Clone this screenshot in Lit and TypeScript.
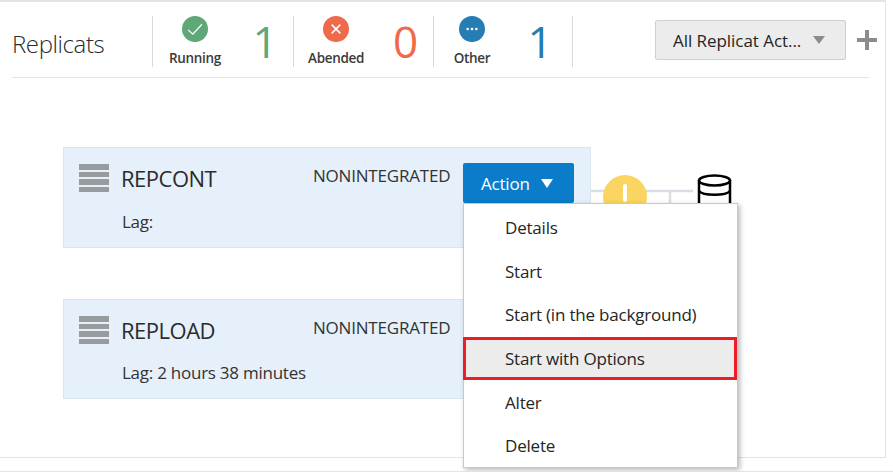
import {LitElement, html, css, svg} from 'lit';
import {customElement} from 'lit/decorators.js';

const statuses = [
  {label: 'Running', count: '1', color: '#5fa777', kind: 'running', glyph: svg`<path d="M7 16l5.500 5L23 9.500" fill="none" stroke="#fff" stroke-width="1.4"/>`},
  {label: 'Abended', count: '0', color: '#ef6a4b', kind: 'abended', glyph: svg`<path d="M10 10l10 10M20 10l-10 10" fill="none" stroke="#fff" stroke-width="1.8"/>`},
  {label: 'Other', count: '1', color: '#267db3', kind: 'other', glyph: svg`<circle cx="10" cy="15" r="1.5" fill="#fff"/><circle cx="15" cy="15" r="1.5" fill="#fff"/><circle cx="20" cy="15" r="1.5" fill="#fff"/>`},
];

const menuItems = ['Details', 'Start', 'Start (in the background)', 'Start with Options', 'Alter', 'Delete'];

@customElement('app-root')
export class AppRoot extends LitElement {
  static override styles = css`
    :host {
      display: block;
      width: 893px;
      height: 472px;
      overflow: hidden;
      background: #fff;
      color: #252525;
      font-family: 'Open Sans', 'Noto Sans', sans-serif;
      box-sizing: border-box;
      border-bottom: 1px solid #e4e4e4;
    }
    .frame {
      width: 886px;
      height: 458px;
      box-sizing: border-box;
      border-top: 2px solid #e4e4e4;
      border-right: 1px solid #e4e4e4;
      border-bottom: 1px solid #e4e4e4;
      padding: 0 16px 0 12px;
    }
    .header {
      display: flex;
      align-items: flex-start;
      height: 75px;
      border-bottom: 1px solid #e4e4e4;
    }
    .title {
      width: 140px;
      margin-top: 25px;
      font-size: 24px;
      line-height: 34px;
      font-weight: 300;
      letter-spacing: -0.4px;
      color: #2b2b2b;
    }
    .status {
      display: flex;
      width: 141px;
      height: 51px;
      margin-top: 14px;
      border-left: 1px solid #d9d9d9;
      box-sizing: border-box;
    }
    .status.abended { width: 140px; }
    .status.other { width: 140px; border-right: 1px solid #d9d9d9; }
    .badge {
      width: 84px;
      display: flex;
      flex-direction: column;
      align-items: center;
    }
    .abended .badge { width: 86px; }
    .other .badge { width: 76px; }
    .badge svg { width: 30px; height: 30px; display: block; }
    .badge span {
      font-size: 13.5px;
      line-height: 18px;
      margin-top: 7px;
      font-weight: 600;
      color: #3a3a3a;
      letter-spacing: -0.3px;
    }
    .count {
      width: 56px;
      margin-top: -2px;
      text-align: center;
      font-size: 44px;
      font-weight: 400;
      line-height: 54px;
    }
    .other .count { width: 60px; }
    .spacer { flex: 1; }
    .filter {
      display: flex;
      align-items: center;
      justify-content: space-between;
      width: 191px;
      height: 40px;
      margin-top: 18px;
      padding: 0 20px 0 17px;
      box-sizing: border-box;
      background: #ececec;
      border: 1px solid #d0d0d0;
      border-radius: 2px;
      font-size: 17px;
      letter-spacing: -0.05px;
      color: #252525;
      white-space: nowrap;
    }
    .caret {
      width: 0;
      height: 0;
      border-left: 6px solid transparent;
      border-right: 6px solid transparent;
      border-top: 8px solid #8c8c8c;
    }
    .plus { flex: none; width: 20px; height: 20px; margin: 28px -8px 0 11px; }
    .rows {
      display: flex;
      flex-direction: column;
      gap: 51px;
      margin: 69px 0 0 51px;
    }
    .row { display: flex; }
    .card {
      display: grid;
      grid-template-columns: 43px 191px 150px 1fr;
      grid-template-rows: 40px auto;
      width: 528px;
      height: 101px;
      box-sizing: border-box;
      padding: 15px 0 0 15px;
      background: #e5f0fa;
      border: 1px solid #d6e6f4;
    }
    .row + .row .card { height: 100px; }
    .row + .row .lag { margin-top: 6px; }
    .bars {
      display: flex;
      flex-direction: column;
      gap: 2px;
      width: 30px;
      margin-top: 1px;
    }
    .bars i { display: block; height: 5.5px; background: #999c9f; }
    .name {
      margin: -1px 0 0 -1px;
      font-size: 22px;
      line-height: 32px;
      letter-spacing: -0.5px;
      color: #2b2b2b;
    }
    .kind {
      font-size: 17px;
      line-height: 26px;
      letter-spacing: -0.2px;
      color: #333;
      white-space: nowrap;
    }
    .lag {
      grid-column: 2 / 4;
      font-size: 17px;
      line-height: 24px;
      margin-top: 7px;
      letter-spacing: -0.25px;
      color: #333;
    }
    .action-wrap { position: relative; }
    .action {
      display: flex;
      align-items: center;
      gap: 11px;
      width: 111px;
      height: 40px;
      padding: 1px 0 0 18px;
      border: none;
      border-radius: 2px;
      background: #0a7cc9;
      color: #fff;
      font: inherit;
      font-size: 17px;
      letter-spacing: -0.2px;
    }
    .action .caret { border-top: 9px solid #fff; margin-top: -1px; }
    .menu {
      position: absolute;
      z-index: 2;
      top: 40px;
      left: 0;
      width: 275px;
      height: 265px;
      box-sizing: border-box;
      padding: 2px 0 1px;
      background: #fff;
      border: 1px solid #c9c9c9;
      box-shadow: 2px 2px 5px rgba(0, 0, 0, 0.28);
    }
    .item {
      display: flex;
      align-items: center;
      height: 43.6px;
      box-sizing: border-box;
      padding-left: 41px;
      font-size: 17px;
      letter-spacing: -0.2px;
      color: #252525;
    }
    .item.on {
      margin-left: -1px;
      padding-left: 39px;
      background: #ececec;
      border: 3px solid #ee1c25;
    }
    .flow { width: 150px; height: 101px; display: block; }
  `;

  private _flow() {
    return html`<svg class="flow" viewBox="0 0 150 101">
      <path d="M0 44H102M79 44V60" fill="none" stroke="#d8dee4" stroke-width="2.5"/>
      <circle cx="34" cy="50" r="22" fill="#fbd561"/>
      <rect x="32" y="37" width="4" height="18" rx="2" fill="#fff"/>
      <path d="M108 33V60H139V33" fill="#fff" stroke="#000" stroke-width="2.5"/>
      <ellipse cx="123.500" cy="33.500" rx="15.500" ry="5" fill="#fff" stroke="#000" stroke-width="2.5"/>
      <path d="M108 44C112 49 135 49 139 44" fill="none" stroke="#000" stroke-width="2.5"/>
    </svg>`;
  }

  private _card(name: string, lag: string, open: boolean) {
    // the second row's Action button sits wholly under the open menu, so it is left out
    return html`<div class="row">
      <div class="card">
        <div class="bars"><i></i><i></i><i></i><i></i></div>
        <div class="name">${name}</div>
        <div class="kind">NONINTEGRATED</div>
        <div class="action-wrap">
          ${open
            ? html`<button class="action">Action <span class="caret"></span></button>
                <div class="menu">
                  ${menuItems.map(
                    (m) => html`<div class="item ${m === 'Start with Options' ? 'on' : ''}">${m}</div>`
                  )}
                </div>`
            : ''}
        </div>
        <div></div>
        <div class="lag">${lag}</div>
      </div>
      ${open ? this._flow() : ''}
    </div>`;
  }

  override render() {
    return html`<div class="frame">
      <div class="header">
        <div class="title">Replicats</div>
        ${statuses.map(
          (s) => html`<div class="status ${s.kind}">
            <div class="badge">
              <svg viewBox="0 0 30 30"><circle cx="15" cy="15" r="15" fill=${s.color}></circle>${s.glyph}</svg>
              <span>${s.label}</span>
            </div>
            <div class="count" style="color:${s.color}">${s.count}</div>
          </div>`
        )}
        <div class="spacer"></div>
        <div class="filter">All Replicat Act... <span class="caret"></span></div>
        <svg class="plus" viewBox="0 0 20 20"><path d="M8 0h4v8h8v4h-8v8H8v-8H0V8h8z" fill="#8c8c8c"/></svg>
      </div>
      <div class="rows">
        ${this._card('REPCONT', 'Lag:', true)}
        ${this._card('REPLOAD', 'Lag: 2 hours 38 minutes', false)}
      </div>
    </div>`;
  }
}

declare global {
  interface HTMLElementTagNameMap {
    'app-root': AppRoot;
  }
}
